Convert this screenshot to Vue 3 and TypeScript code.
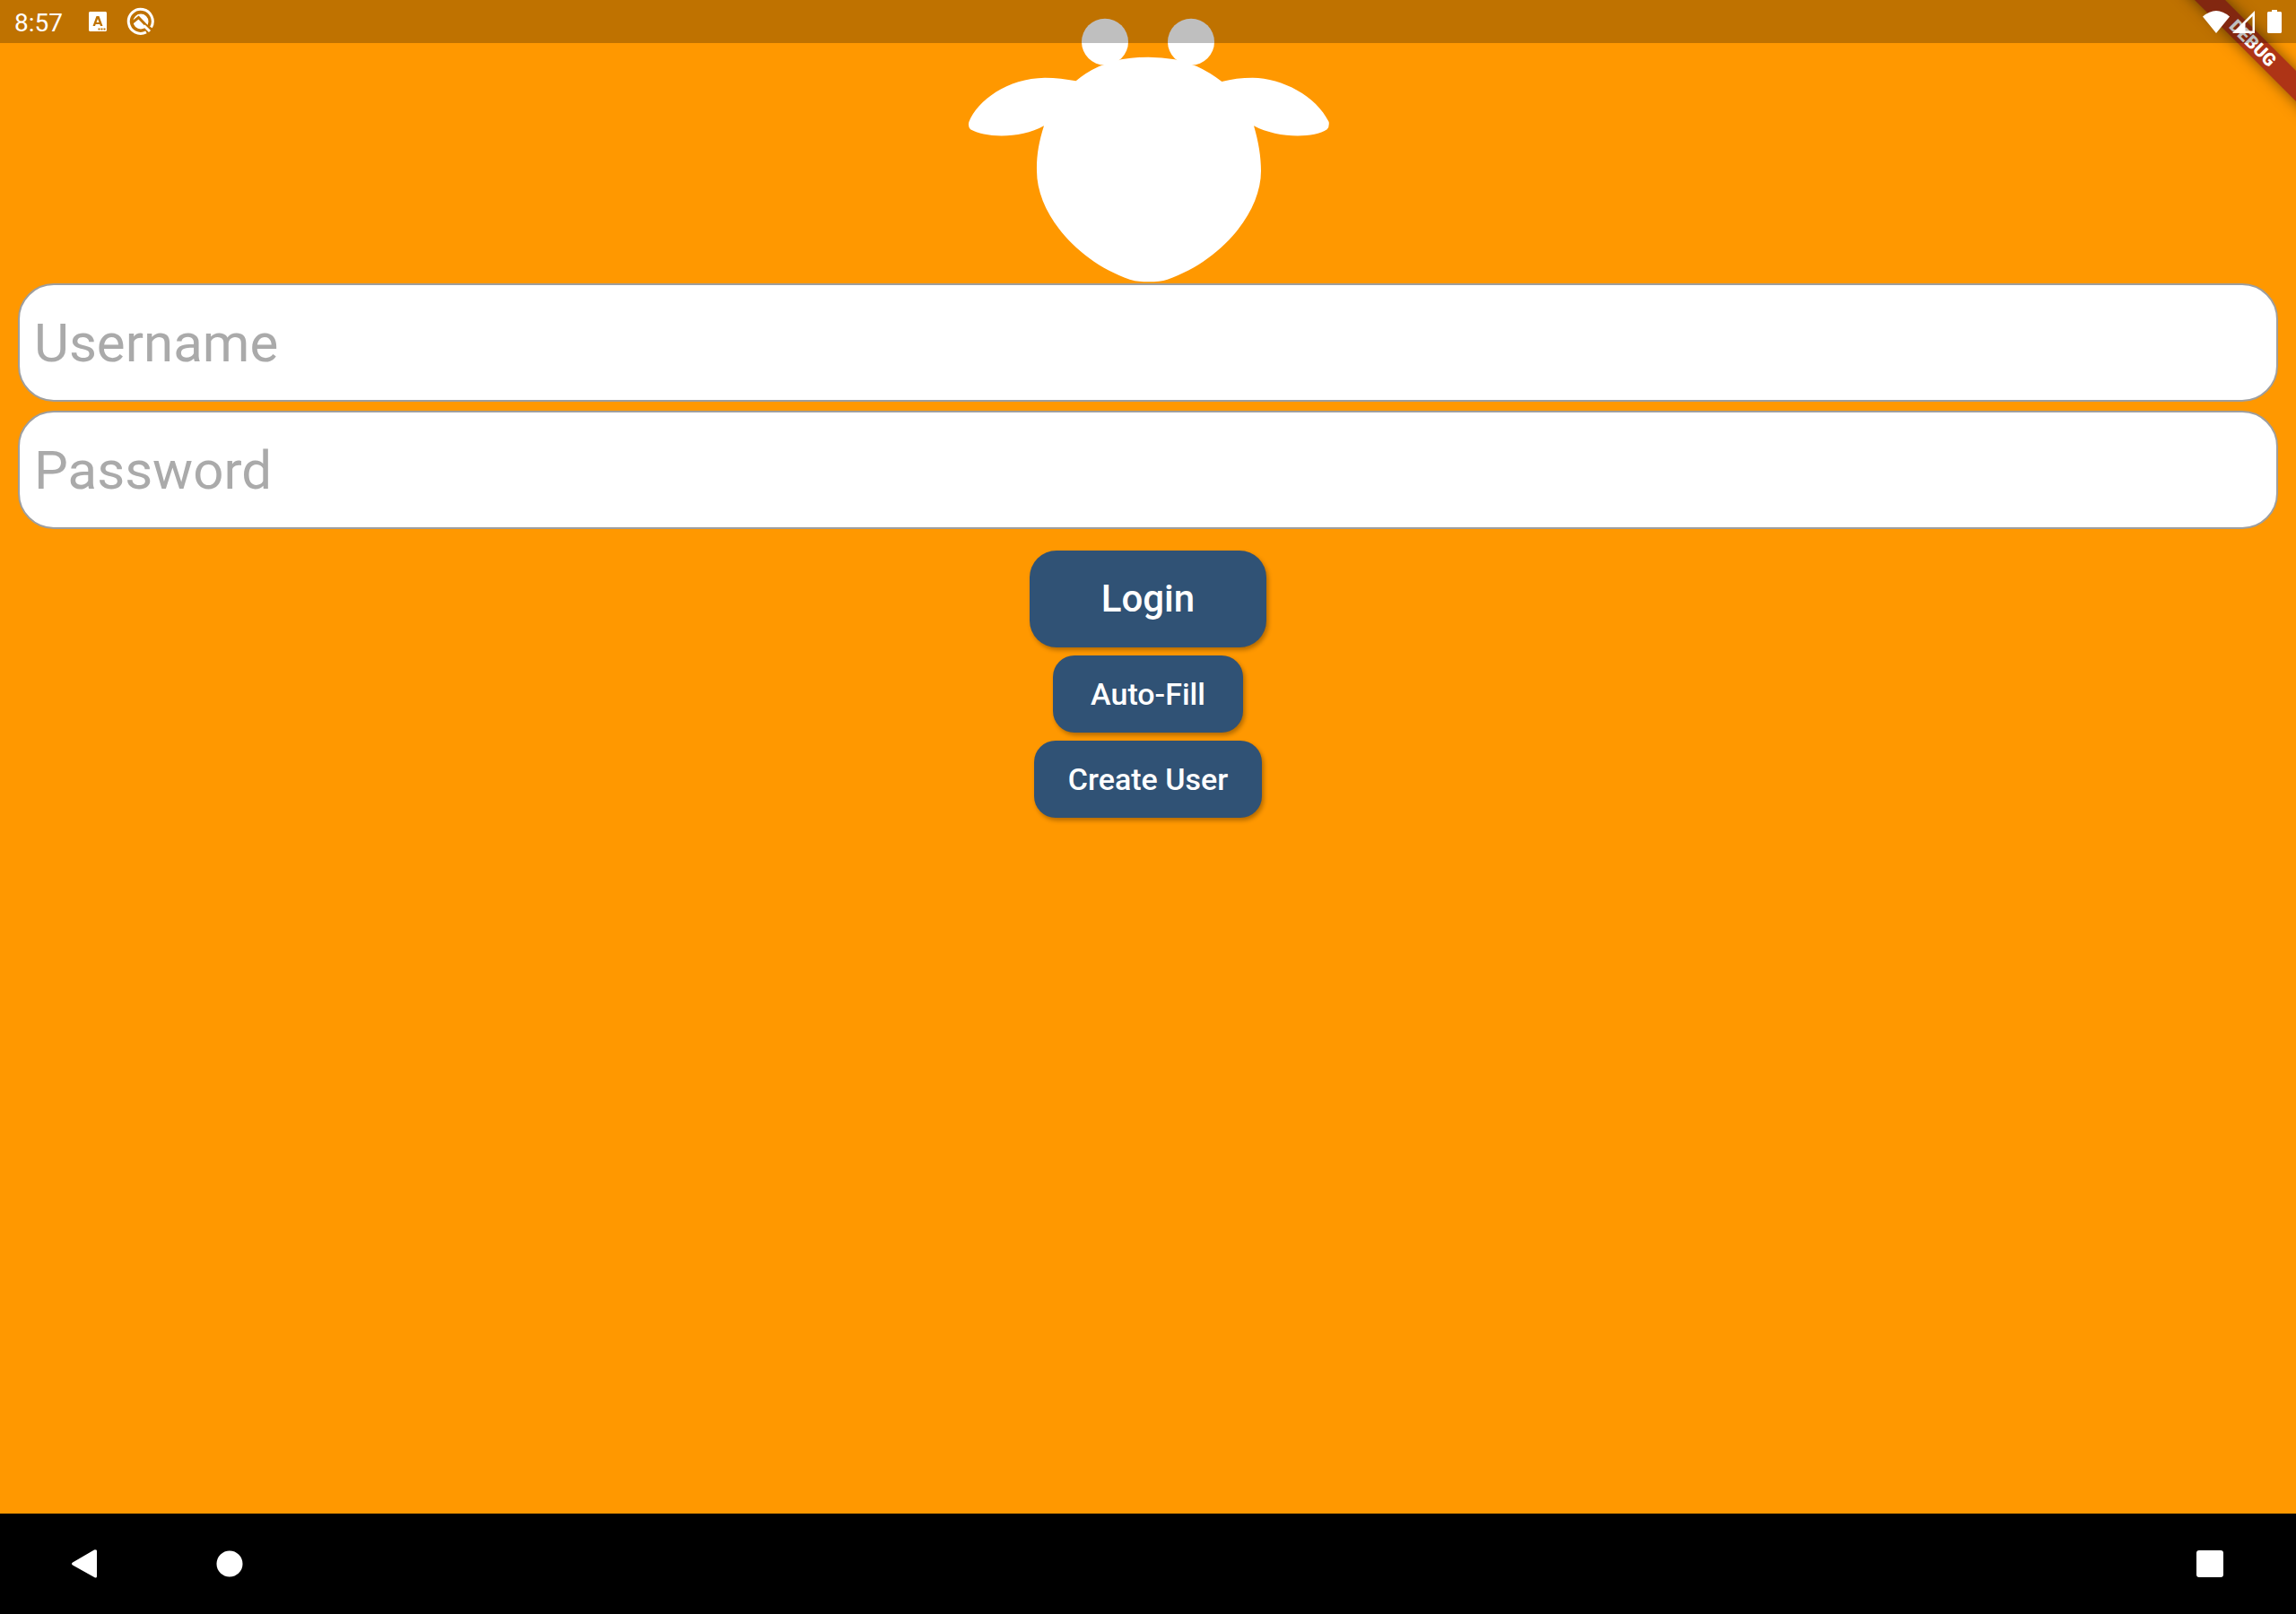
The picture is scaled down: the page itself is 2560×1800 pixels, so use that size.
<script setup lang="ts">
import { ref } from 'vue'

const username = ref('')
const password = ref('')
</script>

<template>
  <div class="screen">
    <form class="login" @submit.prevent>
      <svg class="logo" viewBox="0 0 1320 948" aria-hidden="true">
        <circle cx="516" cy="140" r="78" />
        <circle cx="804" cy="140" r="78" />
        <path d="M570 199 Q662 183 750 199 L822 221 Q868 242 907 273 Q955 260 1010 260 C1110 262 1222 320 1265 408 Q1267 425 1259 433 C1210 465 1090 462 1014 421 C1030 475 1038 525 1038 572 C1038 715 900 875 725 935 Q700 943 662 943 Q624 943 599 935 C424 875 288 715 288 572 C287 520 295 475 312 421 C235 465 115 462 66 433 Q57 423 61 408 C90 335 190 262 315 260 Q370 261 419 271 Q450 243 498 221 Z" />
      </svg>

      <div class="fields">
        <input v-model="username" class="field" type="text" placeholder="Username" aria-label="Username" />
        <input v-model="password" class="field" type="password" placeholder="Password" aria-label="Password" />
      </div>

      <div class="actions">
        <button class="btn btn-primary" type="submit">Login</button>
        <button class="btn btn-fill" type="button">Auto-Fill</button>
        <button class="btn" type="button">Create User</button>
      </div>
    </form>

    <div class="corner"><span class="ribbon">DEBUG</span></div>

    <header class="status">
      <span class="time">8:57</span>
      <svg class="note" width="20" height="22" viewBox="0 0 20 22" aria-hidden="true">
        <path fill="#fff" fill-rule="evenodd" d="M1 0H19L20 1V21L19 22H1L0 21V1ZM8.500 5L4.500 16H7L7.700 14H12.300L13 16H15.500L11.500 5ZM10 8L11.500 12H8.500ZM10.500 18.500V20.500H12.500V18.500ZM13.500 18.500V20.500H15.500V18.500ZM16.500 18.500V20.500H18.500V18.500Z" />
        <path fill="none" stroke="#bf7200" stroke-width="1" d="M6 15.500L9.500 5.500H10.500L14 15.500" />
      </svg>
      <svg width="32" height="32" viewBox="0 0 32 32" aria-hidden="true">
        <path d="M22 27.800A13.500 13.500 0 1 1 27.500 22.500" fill="none" stroke="#fff" stroke-width="3" />
        <circle cx="16" cy="16" r="8.500" fill="#fff" />
        <path d="M5.500 18L13.500 11.500L27 25.500" fill="none" stroke="#bf7200" stroke-width="3" />
        <path d="M19.500 20.500L26 27" fill="none" stroke="#fff" stroke-width="3" />
      </svg>
      <span class="spacer"></span>
      <svg width="30" height="25" viewBox="0 0 30 25" fill="#fff" aria-hidden="true">
        <path d="M0 6.500Q15-6.500 30 6.500L15 25Z" />
      </svg>
      <svg class="signal" width="25" height="25" viewBox="0 0 25 25" fill="#fff" aria-hidden="true">
        <path fill-rule="evenodd" d="M25 0V25H0ZM22.500 6L14.500 14V22.500H22.500Z" />
      </svg>
      <svg class="battery" width="16" height="26" viewBox="0 0 16 26" fill="#fff" aria-hidden="true">
        <path d="M5 0H11V2H15L16 3V25L15 26H1L0 25V3L1 2H5Z" />
      </svg>
    </header>

    <nav class="navbar">
      <button type="button" aria-label="Back">
        <svg width="32" height="32" viewBox="0 0 32 32">
          <path d="M29 0.500Q30 0 30 2V30Q30 32 28 31.500L3 17.500Q1 16 3 14.500L27 0.500Q28 0 29 0.500Z" />
        </svg>
      </button>
      <button type="button" aria-label="Home">
        <svg width="32" height="32" viewBox="0 0 32 32"><circle cx="16" cy="16" r="14.500" /></svg>
      </button>
      <span class="spacer"></span>
      <button type="button" aria-label="Recent apps">
        <svg width="32" height="32" viewBox="0 0 32 32"><rect x="1" y="1" width="30" height="30" rx="3" /></svg>
      </button>
    </nav>
  </div>
</template>

<style>
body {
  margin: 0;
}
</style>

<style scoped>
.screen {
  position: relative;
  display: flex;
  flex-direction: column;
  min-height: 100vh;
  overflow: hidden;
  background: #ff9800;
  font-family: Roboto, sans-serif;
}

svg {
  display: block;
  flex: none;
}

.spacer {
  flex: 1;
}

.login {
  flex: 1;
  display: flex;
  flex-direction: column;
  align-items: center;
  padding: 0 20px;
}

.logo {
  width: 440px;
  height: 316px;
  fill: #fff;
}

.fields {
  align-self: stretch;
  display: flex;
  flex-direction: column;
  gap: 10px;
}

.field {
  box-sizing: border-box;
  width: 100%;
  height: 132px;
  padding: 0 16px;
  border: 2px solid #9e9e9e;
  border-radius: 40px;
  outline: 0;
  background: #fff;
  color: #222;
  font: 400 60px/72px Roboto, sans-serif;
}

.field::placeholder {
  color: #aaa;
  opacity: 1;
}

.actions {
  display: flex;
  flex-direction: column;
  align-items: center;
  gap: 9px;
  padding-top: 24px;
}

.btn {
  height: 86px;
  padding: 0 38px;
  border: 0;
  border-radius: 24px;
  background: #305275;
  box-shadow: 2px 3px 5px rgba(0, 0, 0, 0.3);
  color: #fff;
  font: 500 34px/40px Roboto, sans-serif;
}

.btn-fill {
  padding: 0 42px;
}

.btn-primary {
  height: 108px;
  padding: 0 80px;
  border-radius: 30px;
  font-size: 42px;
  line-height: 50px;
}

.corner {
  position: absolute;
  top: 0;
  right: 0;
  display: flex;
  align-items: center;
  justify-content: center;
  width: 96px;
  height: 96px;
}

.ribbon {
  flex: none;
  width: 200px;
  background: #ae3416;
  box-shadow: 0 0 16px rgba(0, 0, 0, 0.5);
  color: #fff;
  font-size: 20px;
  font-weight: 900;
  line-height: 24px;
  text-align: center;
  transform: rotate(45deg);
}

.status {
  position: absolute;
  top: 0;
  left: 0;
  right: 0;
  display: flex;
  align-items: center;
  box-sizing: border-box;
  height: 48px;
  padding: 0 16px;
  background: rgba(0, 0, 0, 0.25);
  color: #fff;
}

.time {
  padding-top: 3px;
  font-size: 28px;
  line-height: 32px;
}

.note {
  margin: 0 22px 0 29px;
}

.signal {
  margin: 0 14px 0 3px;
}

.navbar {
  display: flex;
  align-items: center;
  gap: 66px;
  height: 112px;
  padding: 0 48px 0 46px;
  background: #000;
}

.navbar button {
  padding: 0 32px;
  border: 0;
  background: none;
}

.navbar svg {
  fill: #fff;
}
</style>
